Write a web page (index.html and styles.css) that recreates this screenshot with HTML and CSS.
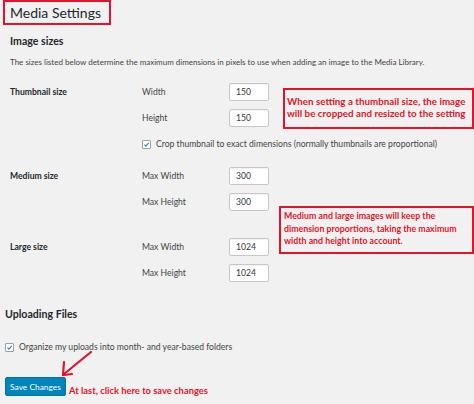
FILE: index.html
```html
<!DOCTYPE html>
<html lang="en">
  <head>
    <meta charset="UTF-8" />
    <meta name="viewport" content="width=device-width, initial-scale=1.0" />
    <title>Media Settings</title>
    <link rel="stylesheet" href="styles.css">
  </head>

  <body>
    <main class="wrap">
      <h1 class="page-title"><span class="boxed">Media Settings</span></h1>

      <h2 class="section-title">Image sizes</h2>
      <p class="desc">The sizes listed below determine the maximum dimensions in pixels to use when adding an image to the Media Library.</p>

      <section class="size-group thumb">
        <div class="group-label">Thumbnail size</div>
        <div class="group-fields">
          <div class="field"><label>Width</label><input type="text" value="150"></div>
          <div class="field"><label>Height</label><input type="text" value="150"></div>
          <label class="check">
            <span class="box"><svg viewBox="0 0 10 10"><path d="M2 5.2 L4.2 7.4 L8.2 2.6" /></svg></span>
            Crop thumbnail to exact dimensions (normally thumbnails are proportional)
          </label>
        </div>
      </section>

      <section class="size-group medium">
        <div class="group-label">Medium size</div>
        <div class="group-fields">
          <div class="field"><label>Max Width</label><input type="text" value="300"></div>
          <div class="field"><label>Max Height</label><input type="text" value="300"></div>
        </div>
      </section>

      <section class="size-group large">
        <div class="group-label">Large size</div>
        <div class="group-fields">
          <div class="field"><label>Max Width</label><input type="text" value="1024"></div>
          <div class="field"><label>Max Height</label><input type="text" value="1024"></div>
        </div>
      </section>

      <h2 class="section-title uploads">Uploading Files</h2>
      <label class="check uploads-check">
        <span class="box"><svg viewBox="0 0 10 10"><path d="M2 5.2 L4.2 7.4 L8.2 2.6" /></svg></span>
        Organize my uploads into month- and year-based folders
      </label>

      <div class="submit-row">
        <button class="btn-primary">Save Changes</button>
        <span class="note-inline">At last, click here to save changes</span>
      </div>

      <!-- anotaciones sobre la captura -->
      <div class="callout callout-thumb">When setting a thumbnail size, the image<br>will be cropped and resized to the setting</div>
      <div class="callout callout-sizes">Medium and large images will keep the dimension proportions, taking the maximum width and height into account.</div>
      <svg class="arrow" viewBox="0 0 40 30">
        <path d="M36 1 L9 23" />
        <path d="M9 11 L8 24 L17 23" />
      </svg>
    </main>
  </body>
</html>
```

FILE: styles.css
```css
html {
  box-sizing: border-box;
  font-family: Lato, "Open Sans", sans-serif;
  font-size: 9px;
}

*,
*:before,
*:after {
  box-sizing: inherit;
}

body {
  margin: 0;
  min-height: 100vh;
  background-color: #f1f1f1;
  color: #444;
}

.wrap {
  position: relative;
  padding: 0 0 0 10px;
  height: 404px;
  overflow: hidden;
}

.page-title {
  margin: 0 0 0 -7px;
  height: 25px;
  font-size: 14px;
  font-weight: 400;
  color: #23282d;
}

.boxed {
  display: inline-block;
  height: 25px;
  padding: 0 8px 0 5px;
  line-height: 21px;
  border: 2px solid #e4132a;
}

.section-title {
  margin: 9px 0 0;
  font-size: 10.6px;
  line-height: 14px;
  font-weight: 700;
  color: #23282d;
}

.desc {
  margin: 8px 0 0;
  font-size: 8px;
  line-height: 12px;
}

.size-group {
  display: grid;
  grid-template-columns: 132px 1fr;
}

.thumb {
  margin-top: 15px;
}

.medium {
  margin-top: 18px;
}

.large {
  margin-top: 27px;
}

.group-label {
  font-size: 8.6px;
  font-weight: 700;
  line-height: 18px;
  color: #23282d;
}

.group-fields {
  display: flex;
  flex-direction: column;
  gap: 8px;
}

.field {
  display: flex;
  align-items: center;
  height: 18px;
}

.field label {
  width: 87px;
  font-size: 8.6px;
}

.field input {
  width: 40px;
  height: 18px;
  padding: 0 6px;
  border: 1px solid #c7c7c7;
  border-radius: 2px;
  background: #fff;
  font-family: inherit;
  font-size: 8.6px;
  color: #32373c;
  box-shadow: inset 0 1px 1px rgba(0, 0, 0, 0.05);
}

.check {
  display: flex;
  align-items: center;
  gap: 5px;
  height: 10px;
  font-size: 8.6px;
}

.group-fields .check {
  margin-top: 4px;
}

.box {
  display: inline-block;
  width: 9px;
  height: 9px;
  border: 1px solid #9aa0a6;
  border-radius: 1px;
  background: #fff;
}

.box svg {
  display: block;
  width: 100%;
  height: 100%;
}

.box path {
  fill: none;
  stroke: #1e8cbe;
  stroke-width: 1.6;
}

.uploads {
  margin: 25px 0 0 -5px;
}

.uploads-check {
  margin: 21px 0 0 -5px;
}

.submit-row {
  display: flex;
  align-items: flex-end;
  gap: 3px;
  margin: 25px 0 0 -5px;
}

.btn-primary {
  height: 19px;
  width: 61px;
  padding: 0;
  border: 1px solid #0073aa;
  border-radius: 2px;
  background: #0085ba;
  color: #fff;
  font-family: inherit;
  font-size: 8.4px;
}

.note-inline {
  font-size: 9.4px;
  font-weight: 700;
  color: #e4132a;
  line-height: 12px;
  margin-bottom: -1px;
}

.callout {
  position: absolute;
  border: 2px solid #e4132a;
  color: #e4132a;
  font-weight: 700;
  font-size: 8.8px;
  line-height: 12px;
}

.callout-thumb {
  left: 283px;
  top: 88px;
  width: 191px;
  height: 41px;
  padding: 5px 2px 0;
  font-size: 9.8px;
  white-space: nowrap;
}

.callout-sizes {
  left: 279px;
  top: 206px;
  width: 195px;
  height: 48px;
  padding: 2px 3px 0;
  line-height: 12.5px;
}

.arrow {
  position: absolute;
  left: 55px;
  top: 351px;
  width: 40px;
  height: 30px;
}

.arrow path {
  fill: none;
  stroke: #e4132a;
  stroke-width: 2.2;
  stroke-linecap: round;
}
```
